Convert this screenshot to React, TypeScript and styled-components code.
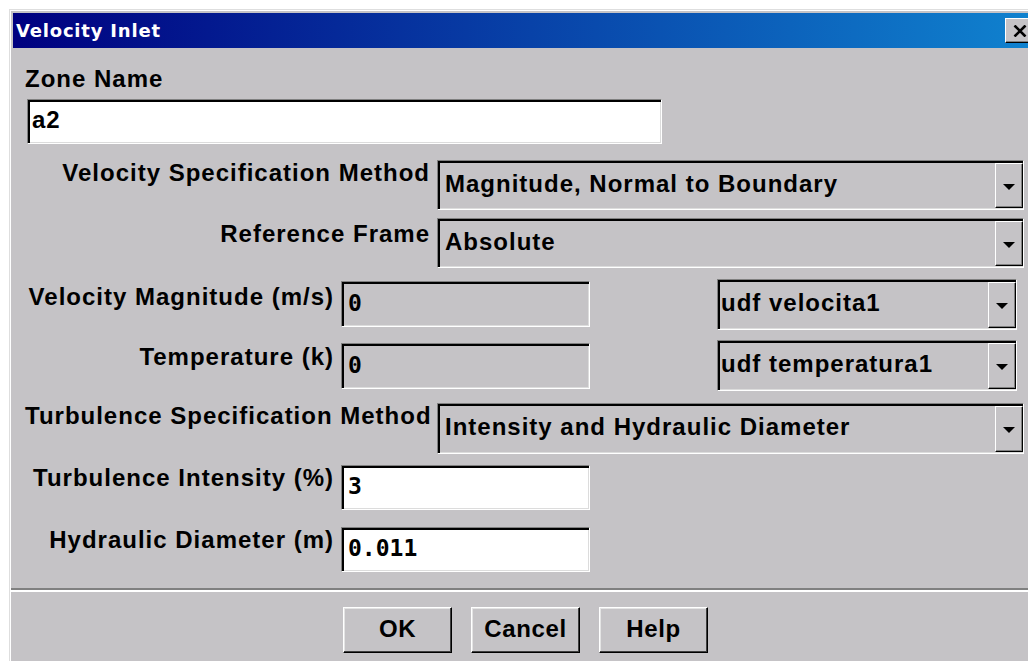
import React from "react";
import styled, { createGlobalStyle } from "styled-components";

const FACE = "#c5c3c6";
const SANS = `"Liberation Sans", Arial, Helvetica, sans-serif`;
const MONO = `"DejaVu Sans Mono", "Liberation Mono", monospace`;

const GlobalStyle = createGlobalStyle`
  html, body { margin: 0; padding: 0; background: #ffffff; overflow: hidden; }
  #root { height: 661px; overflow: hidden; }
`;

/* The dialog runs past the right edge of the screen, so its frame is wider than the page. */
const Window = styled.div`
  box-sizing: border-box;
  margin: 9px 0 0 9px;
  width: calc(100% + 16px);
  height: 690px;
  padding: 3px;
  background: ${FACE};
  border: 1px solid #dedede;
  box-shadow: inset 1px 1px 0 #ffffff;
  display: flex;
  flex-direction: column;
`;

const TitleBar = styled.div`
  flex: none;
  height: 35px;
  display: flex;
  align-items: center;
  justify-content: space-between;
  padding: 0 17px 0 3px;
  background: linear-gradient(90deg, #000080 0%, #1084d0 100%);
`;

const TitleText = styled.span`
  color: #ffffff;
  font-family: "DejaVu Sans", Tahoma, sans-serif;
  font-weight: bold;
  font-size: 18px;
  letter-spacing: 0.8px;
  line-height: 22px;
  padding-top: 1px;
`;

const CloseButton = styled.div`
  box-sizing: border-box;
  width: 27px;
  height: 25px;
  background: ${FACE};
  border: 1px solid;
  border-color: #ffffff #000000 #000000 #ffffff;
  box-shadow: inset -1px -1px 0 #808080;
  display: flex;
  align-items: center;
  justify-content: center;
  padding-left: 2px;
`;

const Body = styled.div`
  display: flex;
  flex-direction: column;
  padding: 0 25px 0 12px;
`;

const Text = styled.div`
  font-family: ${SANS};
  font-weight: bold;
  font-size: 24px;
  letter-spacing: 1px;
  line-height: 24px;
  color: #000000;
  white-space: nowrap;
`;

const ZoneLabel = styled(Text)`
  margin-top: 19px;
`;

const Row = styled.div<{ $mt: number }>`
  display: flex;
  align-items: flex-start;
  margin-top: ${(p) => p.$mt}px;
`;

const Label = styled(Text)<{ $w: number; $pt: number }>`
  flex: none;
  width: ${(p) => p.$w}px;
  padding-top: ${(p) => p.$pt}px;
  margin-right: 7px;
  text-align: right;
`;

const Well = styled.div<{ $w: number; $h: number; $mt?: number; $ml?: number; $paper?: boolean }>`
  box-sizing: border-box;
  flex: none;
  width: ${(p) => p.$w}px;
  height: ${(p) => p.$h}px;
  margin-top: ${(p) => p.$mt ?? 0}px;
  margin-left: ${(p) => p.$ml ?? 0}px;
  background: ${(p) => (p.$paper ? "#ffffff" : FACE)};
  border: 1px solid;
  border-color: #808080 #ffffff #ffffff #808080;
  box-shadow: inset 2px 2px 0 #000000, inset -1px -1px 0 #dcdcdc;
  display: flex;
  align-items: center;
`;

const FieldText = styled.span<{ $inset: number; $mono?: boolean }>`
  flex: 1;
  min-width: 0;
  padding-left: ${(p) => p.$inset}px;
  padding-bottom: 3px;
  font-family: ${(p) => (p.$mono ? MONO : SANS)};
  font-weight: bold;
  font-size: ${(p) => (p.$mono ? 23 : 24)}px;
  letter-spacing: ${(p) => (p.$mono ? 0 : 1)}px;
  line-height: 28px;
  color: #000000;
  white-space: nowrap;
`;

const ArrowButton = styled.div`
  box-sizing: border-box;
  flex: none;
  align-self: stretch;
  width: 28px;
  margin: 2px 0 1px 0;
  background: ${FACE};
  border: 1px solid;
  border-color: #ffffff #000000 #000000 #ffffff;
  box-shadow: inset -1px -1px 0 #808080;
  display: flex;
  align-items: center;
  justify-content: center;

  &::after {
    content: "";
    width: 0;
    height: 0;
    border-left: 6px solid transparent;
    border-right: 6px solid transparent;
    border-top: 6px solid #000000;
    margin-top: 2px;
  }
`;

const Divider = styled.div`
  flex: none;
  margin: 16px -2px 0 -2px;
  border-top: 2px solid #808080;
  border-bottom: 2px solid #ffffff;
`;

const ButtonBar = styled.div`
  display: flex;
  gap: 19px;
  margin-top: 15px;
  padding-left: 330px;
`;

const PushButton = styled.button`
  box-sizing: border-box;
  width: 109px;
  height: 46px;
  padding: 0 0 2px 0;
  background: ${FACE};
  border: 1px solid;
  border-color: #ffffff #000000 #000000 #ffffff;
  box-shadow: inset -1px -1px 0 #404040, inset 1px 1px 0 #e4e4e4;
  font-family: ${SANS};
  font-weight: bold;
  font-size: 24px;
  letter-spacing: 0.6px;
  color: #000000;
  cursor: default;
`;

type SelectProps = { value: string; w: number; h: number; inset: number; mt?: number; ml?: number };

const Select = ({ value, w, h, inset, mt, ml }: SelectProps) => (
  <Well $w={w} $h={h} $mt={mt} $ml={ml}>
    <FieldText $inset={inset}>{value}</FieldText>
    <ArrowButton />
  </Well>
);

const WIDE = 405;
const NARROW = 309;

export default function App() {
  return (
    <>
      <GlobalStyle />
      <Window>
        <TitleBar>
          <TitleText>Velocity Inlet</TitleText>
          <CloseButton>
            <svg width="14" height="12" viewBox="0 0 14 12">
              <path d="M1.5 0.5 L12.5 11.5 M12.5 0.5 L1.5 11.5" stroke="#000" strokeWidth="2.6" fill="none" />
            </svg>
          </CloseButton>
        </TitleBar>

        <Body>
          <ZoneLabel>Zone Name</ZoneLabel>
          <Row $mt={8}>
            <Well $w={635} $h={45} $ml={2} $paper>
              <FieldText $inset={4}>a2</FieldText>
            </Well>
          </Row>

          <Row $mt={16}>
            <Label $w={WIDE} $pt={1}>Velocity Specification Method</Label>
            <Select value="Magnitude, Normal to Boundary" w={587} h={50} inset={7} />
          </Row>

          <Row $mt={8}>
            <Label $w={WIDE} $pt={4}>Reference Frame</Label>
            <Select value="Absolute" w={587} h={50} inset={7} />
          </Row>

          <Row $mt={11}>
            <Label $w={NARROW} $pt={6}>Velocity Magnitude (m/s)</Label>
            <Well $w={249} $h={46} $mt={2}>
              <FieldText $inset={6} $mono>0</FieldText>
            </Well>
            <Select value="udf velocita1" w={300} h={51} inset={3} ml={127} />
          </Row>

          <Row $mt={10}>
            <Label $w={NARROW} $pt={5}>Temperature (k)</Label>
            <Well $w={249} $h={46} $mt={3}>
              <FieldText $inset={6} $mono>0</FieldText>
            </Well>
            <Select value="udf temperatura1" w={300} h={51} inset={3} ml={127} />
          </Row>

          <Row $mt={12}>
            <Label $w={WIDE} $pt={1}>Turbulence Specification Method</Label>
            <Select value="Intensity and Hydraulic Diameter" w={587} h={51} inset={7} />
          </Row>

          <Row $mt={11}>
            <Label $w={NARROW} $pt={1}>Turbulence Intensity (%)</Label>
            <Well $w={249} $h={45} $paper>
              <FieldText $inset={6} $mono>3</FieldText>
            </Well>
          </Row>

          <Row $mt={17}>
            <Label $w={NARROW} $pt={1}>Hydraulic Diameter (m)</Label>
            <Well $w={249} $h={45} $paper>
              <FieldText $inset={6} $mono>0.011</FieldText>
            </Well>
          </Row>
        </Body>

        <Divider />

        <ButtonBar>
          <PushButton>OK</PushButton>
          <PushButton>Cancel</PushButton>
          <PushButton>Help</PushButton>
        </ButtonBar>
      </Window>
    </>
  );
}
